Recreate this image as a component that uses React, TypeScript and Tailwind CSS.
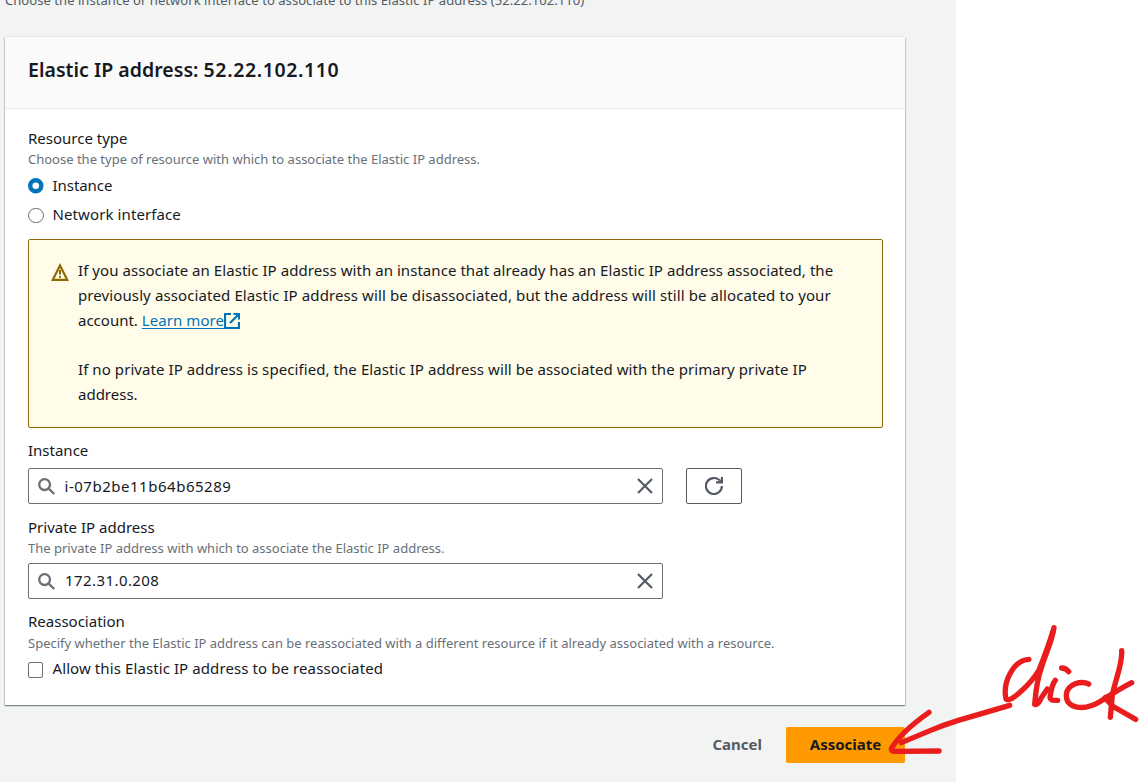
import type { ReactNode } from "react";

function Label({ children }: { children: ReactNode }) {
  return <div className="h-5 leading-5"><span>{children}</span></div>;
}

function SearchField({ value, className }: { value: string; className: string }) {
  return (
    <div className="flex h-9 w-[635px] items-center rounded-[2px] border border-[#687078] pl-[9px] pr-[9px]">
      <svg className="size-[17px] shrink-0" viewBox="0 0 17 17" fill="none" stroke="#687078" strokeWidth="2.3">
        <circle cx="6.6" cy="6.6" r="5.4" />
        <path d="M10.7 10.7l5.5 5.3" />
      </svg>
      <span className={className}>{value}</span>
      <svg className="ml-auto size-4 shrink-0" viewBox="0 0 16 16" fill="none" stroke="#545b64" strokeWidth="2.2">
        <path d="M1 1l14 14M15 1L1 15" />
      </svg>
    </div>
  );
}

export default function App() {
  return (
    <div className="relative flex h-[782px] w-[1139px] overflow-hidden bg-white font-['Noto_Sans',sans-serif] text-[15px] text-[#16191f]">
      <div className="flex w-[956px] flex-col bg-[#f2f3f3] pl-[5px]">
        <p className="-mt-[10px] h-[47px] shrink-0 leading-5 text-[13px] whitespace-nowrap text-[#545b64]">
          <span className="tracking-[0.055px]">Choose the instance or network interface to associate to this Elastic IP address (52.22.102.110)</span>
        </p>
        <section className="h-[668px] w-[900px] shrink-0 bg-white shadow-[0_1px_1px_0_rgba(0,28,36,0.3),1px_1px_1px_0_rgba(0,28,36,0.15),-1px_1px_1px_0_rgba(0,28,36,0.15),0_-1px_0_0_#e7eaea]">
          <header className="flex h-[72px] items-center border-b border-[#eaeded] bg-[#fafafa] px-[23px] pb-[6px]">
            <h1 className="text-[19.5px] font-semibold tracking-[0.03px] whitespace-nowrap">Elastic IP address: <span className="tracking-[0.62px]">52.22.102.110</span></h1>
          </header>
          <div className="flex flex-col px-[23px] pr-[22px] pt-[19px] whitespace-nowrap">
            <Label>Resource type</Label>
            <p className="h-[23px] text-[13px] leading-[23px] text-[#687078]"><span>Choose the type of resource with which to associate the Elastic IP address.</span></p>
            <div className="flex h-[29px] items-center">
              <svg className="mt-px size-[15.5px]" viewBox="0 0 16 16">
                <circle cx="8" cy="8" r="5.7" fill="white" stroke="#0073bb" strokeWidth="4.6" />
              </svg>
              <span className="ml-[9px] tracking-[-0.05px]">Instance</span>
            </div>
            <div className="flex h-[29px] items-center">
              <span className="mt-[2px] size-[15.5px] rounded-full border border-[#687078] bg-white" />
              <span className="ml-[9px] tracking-[0.1px]">Network interface</span>
            </div>
            <div className="mt-[10px] flex h-[189px] rounded-[2px] border border-[#906806] bg-[#fffce9] pl-[22px] pt-[18px]">
              <svg className="mt-[5px] size-[18px] shrink-0" viewBox="0 0 18 18" fill="none" stroke="#906806" strokeWidth="2.2">
                <path d="M9 2.4L1.8 16.8h14.4z" />
                <path d="M9 7v4.4M9 12.7v2" strokeWidth="2" />
              </svg>
              <div className="ml-[9px] leading-[24.8px]">
                <p><span className="tracking-[0.055px]">If you associate an Elastic IP address with an instance that already has an Elastic IP address associated, the</span></p>
                <p><span className="tracking-[0.105px]">previously associated Elastic IP address will be disassociated, but the address will still be allocated to your</span></p>
                <p className="flex">
                  <span className="whitespace-pre">account. </span>
                  <a className="tracking-[0.08px] text-[#0073bb] underline underline-offset-2">Learn more</a>
                  <svg className="mt-[5px] size-4" viewBox="0 0 16 16" fill="none" stroke="#0073bb" strokeWidth="2.2">
                    <path d="M7 1H1v14h14V9M9.5 1H15v5.5M15 1L6 10" />
                  </svg>
                </p>
                <p className="mt-[24.5px]"><span className="tracking-[0.076px]">If no private IP address is specified, the Elastic IP address will be associated with the primary private IP</span></p>
                <p><span>address.</span></p>
              </div>
            </div>
            <div className="mt-3"><Label>Instance</Label></div>
            <div className="mt-2 flex gap-[23px]">
              <SearchField value="i-07b2be11b64b65289" className="ml-[9.5px] tracking-[0.52px]" />
              <button className="flex h-9 w-14 items-center justify-center rounded-[2px] border border-[#545b64]">
                <svg className="size-[18px]" viewBox="0 0 18 18" fill="none" stroke="#545b64" strokeWidth="2.2">
                  <path d="M16.9 9A8 8 0 1 1 14.8 3.6" />
                  <path d="M17 0v5.3h-6" />
                  <path d="M17 1.5v4h-4z" fill="#545b64" stroke="none" />
                </svg>
              </button>
            </div>
            <div className="mt-[13px]"><Label>Private IP address</Label></div>
            <p className="h-[26px] text-[13px] leading-[22px] text-[#687078]"><span>The private IP address with which to associate the Elastic IP address.</span></p>
            <SearchField value="172.31.0.208" className="ml-[10px] pb-px tracking-[0.42px]" />
            <div className="mt-3"><Label>Reassociation</Label></div>
            <p className="h-[25px] text-[13px] leading-6 text-[#687078]"><span>Specify whether the Elastic IP address can be reassociated with a different resource if it already associated with a resource.</span></p>
            <div className="flex h-6 items-center">
              <span className="mt-[3px] h-4 w-[15px] rounded-[2px] border border-[#687078] bg-white" />
              <span className="ml-[9.5px] tracking-[0.095px]">Allow this Elastic IP address to be reassociated</span>
            </div>
          </div>
        </section>
        <footer className="mt-[22px] flex h-9 w-[900px] items-center justify-end font-bold">
          <button className="mr-6 pb-[2px] text-[#545b64]">Cancel</button>
          <button className="h-9 w-[119px] rounded-[2px] bg-[#ff9900] pb-[2px]">Associate</button>
        </footer>
      </div>
      <svg className="pointer-events-none absolute left-[870px] top-[610px] h-[172px] w-[269px]" viewBox="0 0 807 516" fill="none" stroke="#e91d1d" strokeWidth="16" strokeLinecap="round" strokeLinejoin="round">
        <path d="M419 286L265 331Q220 345 182 361L94 398" />
        <path d="M177 307C130 340 86 378 64 416Q64 424 76 424L207 423" />
        <path d="M477 148C430 150 397 217 408 267Q419 276 454 243Q486 215 507 180Q535 110 552 53C547 92 528 128 513 177Q500 212 494 283Q504 286 513 265L532 237" />
        <path d="M556 211Q545 224 540 263Q542 273 563 271M575 174Q588 174 596 185" />
        <path d="M656 222C635 212 593 220 589 253C586 296 641 307 698 270Q745 239 785 218" />
        <path d="M755 122C758 162 737 205 727 255L721 322M705 263L727 288L797 328M708 262L722 270" />
      </svg>
    </div>
  );
}
